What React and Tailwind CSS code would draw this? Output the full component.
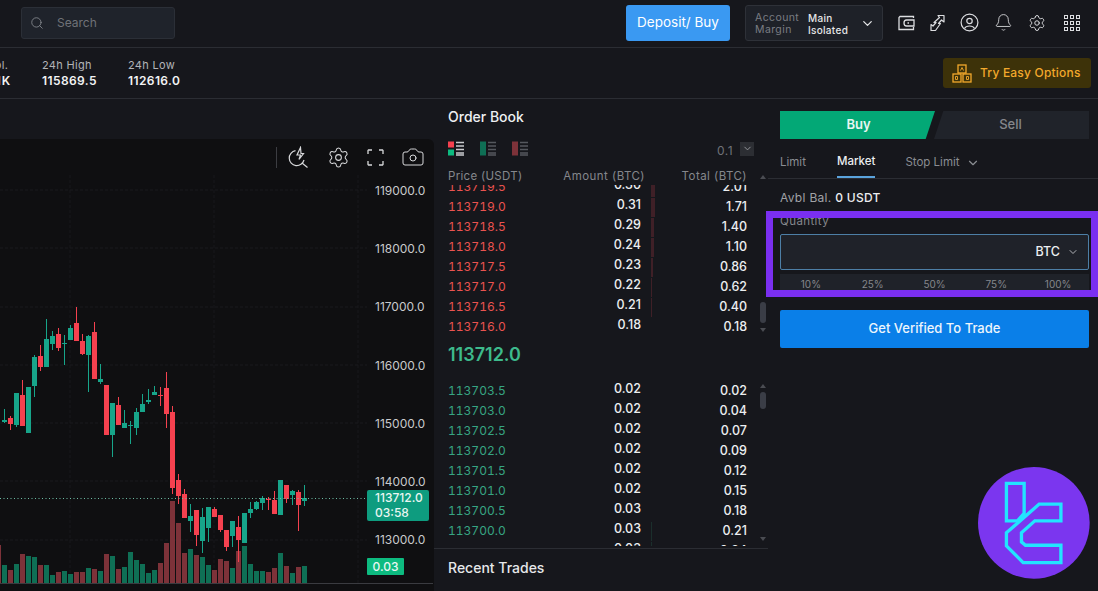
import React from 'react';
import { Search, ChevronDown, Bell, Settings, Camera } from 'lucide-react';

// x = 4.5 + 6 * index, values are [wickTop, wickBottom, bodyTop, bodyBottom, color]
const candles = [
  [409, 423, 420, 422, 'g'], [416, 430, 418, 424, 'r'], [393, 427, 393, 425, 'g'], [380, 426, 395, 426, 'r'],
  [387, 433, 387, 433, 'g'], [355, 397, 357, 386, 'g'], [345, 371, 356, 367, 'r'], [319, 367, 339, 367, 'g'],
  [331, 350, 336, 344, 'g'], [328, 351, 334, 348, 'r'], [335, 365, 343, 344, 'g'], [325, 340, 328, 340, 'g'],
  [307, 341, 323, 341, 'r'], [334, 355, 341, 354, 'r'], [335, 392, 336, 355, 'g'], [322, 379, 332, 379, 'r'],
  [364, 384, 379, 382, 'g'], [385, 435, 385, 435, 'r'], [403, 457, 403, 435, 'g'], [397, 425, 405, 425, 'r'],
  [410, 428, 423, 428, 'g'], [421, 444, 425, 426, 'g'], [408, 435, 412, 428, 'g'], [394, 412, 404, 412, 'g'],
  [389, 404, 400, 402, 'g'], [386, 395, 392, 395, 'g'], [387, 406, 395, 396, 'r'], [372, 428, 388, 414, 'r'],
  [406, 494, 412, 488, 'r'], [474, 504, 480, 496, 'r'], [489, 518, 494, 518, 'r'], [504, 532, 516, 521, 'g'],
  [510, 546, 510, 535, 'r'], [508, 553, 517, 541, 'g'], [507, 542, 507, 528, 'g'], [507, 517, 509, 517, 'r'],
  [515, 532, 515, 530, 'r'], [530, 551, 530, 547, 'r'], [521, 547, 521, 536, 'g'], [516, 562, 527, 540, 'r'],
  [513, 543, 513, 543, 'g'], [502, 518, 509, 513, 'g'], [501, 510, 502, 509, 'g'], [496, 510, 498, 503, 'g'],
  [497, 510, 499, 500, 'r'], [491, 514, 500, 514, 'r'], [480, 515, 480, 515, 'g'], [485, 503, 485, 499, 'r'],
  [490, 505, 491, 495, 'g'], [490, 531, 492, 505, 'r'], [485, 506, 498, 501, 'g'],
];

// same x grid as the candles, top of each volume bar
const volumes = [
  565, 570, 564, 554, 556, 557, 565, 565, 575, 572, 571, 574, 572, 572, 568, 569, 571, 554, 556, 569, 567, 552, 560,
  564, 573, 570, 563, 543, 501, 523, 553, 549, 555, 557, 565, 570, 559, 561, 568, 551, 546, 564, 571, 571, 572, 568,
  553, 566, 573, 567, 566,
];

const axisPrices = ['119000.0', '118000.0', '117000.0', '116000.0', '115000.0', '114000.0', '113000.0'];

const asks = [
  ['113719.5', '0.30', '2.01', 4],
  ['113719.0', '0.31', '1.71', 4],
  ['113718.5', '0.29', '1.40', 3],
  ['113718.0', '0.24', '1.10', 3],
  ['113717.5', '0.23', '0.86', 2],
  ['113717.0', '0.22', '0.62', 1],
  ['113716.5', '0.21', '0.40', 1],
  ['113716.0', '0.18', '0.18', 0],
];

const bids = [
  ['113703.5', '0.02', '0.02', 0],
  ['113703.0', '0.02', '0.04', 0],
  ['113702.5', '0.02', '0.07', 0],
  ['113702.0', '0.02', '0.09', 0],
  ['113701.5', '0.02', '0.12', 0],
  ['113701.0', '0.02', '0.15', 0],
  ['113700.5', '0.03', '0.18', 0],
  ['113700.0', '0.03', '0.21', 1],
  ['113699.5', '0.03', '0.24', 1],
];

const percents = ['10%', '25%', '50%', '75%', '100%'];

const BookRow = ({ row, priceClass, barClass }) => (
  <div className="flex h-5 shrink-0 items-center text-[12.5px]">
    <span className={`w-[115px] text-xs tabular-nums ${priceClass}`}>{row[0]}</span>
    <span className="mb-1 w-[78px] text-right font-medium text-[#eceef0]">{row[1]}</span>
    <span className="ml-[10px] flex h-5 w-[4px] items-center">
      <span className={`h-[19px] ${barClass}`} style={{ width: row[3] }} />
    </span>
    <span className="w-[92px] text-right font-medium text-[#eceef0]">{row[2]}</span>
  </div>
);

const ScrollThumb = ({ top, height }) => (
  <div className="absolute left-[760px] w-[6px] rounded-sm bg-[#3a3d46]" style={{ top, height }} />
);

const ScrollArrow = ({ top, up }) => (
  <svg className="absolute left-[760px] h-[4px] w-[6px]" style={{ top }} viewBox="0 0 6 4" fill="#4a4c52">
    <path d={up ? 'M3 0 6 4H0Z' : 'M0 0H6L3 4Z'} />
  </svg>
);

const ViewIcon = ({ bar, top, bottom }) => (
  <svg width="16" height="15" viewBox="0 0 16 15">
    {bar ? (
      <rect x="0" y="0.5" width="6" height="14" fill={bar} />
    ) : (
      <>
        <rect x="0" y="0.5" width="6" height="6" fill={top} />
        <rect x="0" y="8.5" width="6" height="6" fill={bottom} />
      </>
    )}
    <path d="M8 1.5h8M8 5h8M8 8.500h8M8 12h8M8 14h8" stroke={bar ? '#55585e' : '#c9cbce'} strokeWidth="1.3" />
  </svg>
);

const Logo = () => (
  <svg className="absolute left-[978px] top-[467px] h-[112px] w-[112px]" viewBox="55 51 335 335">
    <circle cx="222" cy="218" r="167" fill="#7b36ef" />
    <g fill="none" stroke="#22e4ff" strokeWidth="10">
      <path d="M140 100H193V190L173 212H140Z" />
      <path d="M238 162H303V212H225L185 248V275L197 285H303V337H190L140 287V248Z" />
    </g>
  </svg>
);

const Chart = () => (
  <svg className="absolute left-0 top-0 h-[452px] w-[434px]" viewBox="0 139 434 452">
    {[190, 248, 307, 365, 423, 481, 540].map((y) => (
      <path key={y} d={`M0 ${y}H367`} stroke="#1a1b1f" strokeDasharray="3 2" />
    ))}
    {[70, 214, 358].map((x) => (
      <path key={x} d={`M${x} 175V583`} stroke="#18191c" strokeDasharray="3 2" />
    ))}
    <rect x="0" y="545" width="1" height="38" fill="#7d3239" />
    {volumes.map((top, i) => (
      <rect
        key={i}
        x={2 + 6 * i}
        y={top}
        width="5"
        height={583 - top}
        fill={candles[i][4] === 'g' ? '#0f6f55' : '#7d3239'}
      />
    ))}
    {candles.map(([wt, wb, bt, bb, c], i) => {
      const x = 2 + 6 * i;
      const color = c === 'g' ? '#17a58a' : '#f5414f';
      return (
        <g key={i} fill={color}>
          <rect x={x + 2} y={wt} width="1" height={wb - wt} />
          <rect x={x} y={bt} width="5" height={Math.max(bb - bt, 1)} />
        </g>
      );
    })}
    <path d="M0 498.500H367" stroke="#6fbfa6" strokeDasharray="1 2.500" />
    <path d="M0 583.500H433" stroke="#3a3b40" />
  </svg>
);

const App = () => {
  return (
    <div className="relative flex h-screen w-full flex-col overflow-hidden bg-[#16171c] font-['Inter',sans-serif] text-white">
      {/* Top bar */}
      <header className="flex h-12 shrink-0 items-center border-b border-[#2b2d33] pb-[2px]">
        <div className="ml-[21px] flex h-8 w-[154px] items-center gap-[13px] rounded-[3px] border border-[#2b2f37] bg-[#1f232b] pl-2">
          <Search size={14} strokeWidth={1.4} className="text-[#8b8e94]" />
          <span className="text-xs text-[#6f7278]">Search</span>
        </div>
        <button className="ml-auto flex h-9 w-[104px] items-center justify-center rounded-[3px] bg-[#3a99f2] text-[13.5px] text-white">
          Deposit/ Buy
        </button>
        <div className="ml-[15px] flex h-9 w-[138px] items-center rounded-[3px] border border-[#2e3138] bg-[#1e2128] pl-[9px] pt-[2px] text-[10.5px] leading-[12px] tracking-[0.4px]">
          <div className="w-[53px] text-[#7a7d83]">
            <div>Account</div>
            <div>Margin</div>
          </div>
          <div className="text-[10px] font-medium tracking-[0.3px] text-[#e6e7e9]">
            <div>Main</div>
            <div>Isolated</div>
          </div>
          <ChevronDown size={15} strokeWidth={2} className="ml-[12px] text-[#e6e7e9]" />
        </div>
        <div className="ml-[15px] mr-[18px] flex items-center gap-[15px] text-[#dcdde0]">
          <svg width="17" height="16" viewBox="0 0 17 16" fill="none" stroke="currentColor" strokeWidth="1.3" className="-mr-[1px]">
            <path d="M15.500 3V1.500H2L1 2.500V14.500H15.500V12" />
            <path d="M16 5H8.500C6.500 5 6 6.500 6 8S6.500 11 8.500 11H16Z" />
            <path d="M9.500 8H11" />
          </svg>
          <svg width="16" height="18" viewBox="0 0 16 18" fill="none" stroke="currentColor" strokeWidth="1.2" strokeLinejoin="round">
            <path d="M9 1.500H15V8L12.500 6 9.500 9.500H11.500L6.500 16.500H2V10.500L4 12 7 8.500H5L10.500 3.500Z" />
          </svg>
          <svg width="19" height="19" viewBox="0 0 19 19" fill="none" stroke="currentColor" strokeWidth="1.2">
            <circle cx="9.500" cy="9.500" r="8.400" />
            <circle cx="9.500" cy="8" r="2.700" />
            <path d="M4.500 15.500C5.500 13.500 7 13 9.500 13S13.500 13.500 14.500 15.500" />
          </svg>
          <Bell size={19} strokeWidth={1.1} />
          <Settings size={18} strokeWidth={1.3} />
          <svg width="16" height="16" viewBox="0 0 16 16" fill="currentColor" className="ml-[3px]">
            {[0, 6, 12].map((y) =>
              [0, 6, 12].map((x) => (
                <path key={`${x}-${y}`} fillRule="evenodd" d={`M${x} ${y}h4v4h-4zM${x + 1} ${y + 1}v2h2v-2z`} />
              )),
            )}
          </svg>
        </div>
      </header>

      {/* Stats */}
      <div className="flex h-[51px] shrink-0 items-center border-b border-[#2b2d33]">
        <div className="ml-[-37px] w-[79px]">
          <div className="text-[11px] tracking-[0.3px] text-[#b2b4b8]">24h Vol.</div>
          <div className="text-xs font-semibold tracking-[0.9px] text-[#f2f3f4]">1021.1K</div>
        </div>
        <div className="w-[86px]">
          <div className="text-[11px] tracking-[0.3px] text-[#b2b4b8]">24h High</div>
          <div className="text-xs font-semibold tracking-[0.4px] text-[#f2f3f4]">115869.5</div>
        </div>
        <div className="w-[86px]">
          <div className="text-[11px] tracking-[0.3px] text-[#b2b4b8]">24h Low</div>
          <div className="text-xs font-semibold tracking-[0.4px] text-[#f2f3f4]">112616.0</div>
        </div>
        <div className="ml-auto mr-[7px] flex h-[30px] w-[148px] items-center gap-2 rounded-[3px] bg-[#3d3209] pl-[9px] text-xs font-medium tracking-[0.2px] text-[#f3a92c]">
          <svg width="20" height="19" viewBox="0 0 20 19" fill="none" stroke="currentColor" strokeWidth="1.3">
            <rect x="6" y="1" width="8" height="8" />
            <rect x="1" y="10" width="8" height="8" />
            <rect x="11" y="10" width="8" height="8" />
            <path d="M8.500 6.500 10 3.500l1.500 3M3.500 12.500h2v3h-2zM16.500 12.500h-2v3h2z" strokeWidth="0.9" />
          </svg>
          Try Easy Options
        </div>
      </div>

      <main className="flex min-h-0 flex-1">
        {/* Chart */}
        <section className="mt-10 flex w-[434px] shrink-0 flex-col">
          <div className="relative flex-1 rounded-tr-md bg-[#0f0f11]">
            <Chart />
            <div className="relative flex h-9 items-center justify-end gap-[17px] pr-[9px] text-[#d8d9db]">
              <span className="-mr-[6px] h-[21px] w-px bg-[#3c3d42]" />
              <svg width="22" height="22" viewBox="0 0 22 22" fill="none" stroke="currentColor" strokeWidth="1.200">
                <path d="M7.500 4.700A7.500 7.500 0 1 0 16 14" />
                <path d="M12.500 1.500 9 9H12.500L11 13.500 15.500 7.500H13Z" />
                <path d="M14 17 19.500 21.500" />
              </svg>
              <Settings size={23} strokeWidth={1.1} />
              <svg width="17" height="17" viewBox="0 0 17 17" fill="none" stroke="currentColor" strokeWidth="1.3">
                <path d="M1 5V1.500L1.500 1H5M12 1H15.500L16 1.500V5M16 12V15.500L15.500 16H12M5 16H1.500L1 15.500V12" />
              </svg>
              <Camera size={24} strokeWidth={1} />
            </div>
            <div className="relative ml-[375px] flex w-[50px] flex-col gap-[43.200px] pt-[8px] text-xs leading-[15px] text-[#c9cacc]">
              {axisPrices.map((p) => (
                <span key={p}>{p}</span>
              ))}
            </div>
            <div className="absolute left-[367px] top-[351px] h-[31px] w-[62px] rounded-[2px] bg-[#0e9c7f] pl-[8px] pt-[1px] text-xs font-medium leading-[14.500px] text-[#e8f6f2]">
              <div>113712.0</div>
              <div>03:58</div>
            </div>
            <div className="absolute left-[367px] top-[419px] flex h-[17px] w-[37px] items-center justify-center rounded-[1px] bg-[#0dbb80] text-xs font-medium text-[#e8f6f2]">
              0.03
            </div>
          </div>
        </section>

        {/* Order book */}
        <section className="flex w-[334px] shrink-0 flex-col pl-[14px]">
          <h2 className="flex h-9 shrink-0 items-center text-sm font-medium text-[#eef0f2]">Order Book</h2>
          <div className="flex h-[26px] shrink-0 items-center">
            <div className="flex gap-4">
              <ViewIcon top="#f5414f" bottom="#0dbb80" />
              <ViewIcon bar="#0f6f55" />
              <ViewIcon bar="#7d3239" />
            </div>
            <span className="ml-[189px] mt-[6px] text-xs tracking-[0.5px] text-[#6f7278]">0.1</span>
            <span className="ml-[7px] mt-[1px] flex h-[14px] w-[14px] items-center justify-center bg-[#2c2e33] text-[#9a9ca1]">
              <ChevronDown size={11} />
            </span>
          </div>
          <div className="flex h-6 shrink-0 items-end text-[11.500px] tracking-[0.3px] text-[#85878c]">
            <span className="w-[115px]">Price (USDT)</span>
            <span className="w-[82px] text-right tracking-[0.45px]">Amount (BTC)</span>
            <span className="w-[102px] text-right tracking-[0.45px]">Total (BTC)</span>
          </div>
          <div className="flex h-[152px] shrink-0 flex-col justify-end overflow-hidden">
            {asks.map((row) => (
              <BookRow key={row[0]} row={row} priceClass="text-[#ea5350]" barClass="bg-[#3f2027]" />
            ))}
          </div>
          <div className="flex h-[35px] shrink-0 items-center text-lg font-semibold text-[#3dba8c]">113712.0</div>
          <div className="flex h-[174px] shrink-0 flex-col overflow-hidden pt-[9px]">
            {bids.map((row) => (
              <BookRow key={row[0]} row={row} priceClass="text-[#36a583]" barClass="bg-[#1b2f2c]" />
            ))}
          </div>
          <div className="-ml-[14px] mt-[2px] flex h-[38px] shrink-0 items-center border-t border-[#2b2d33] pl-[14px] text-sm font-medium text-[#e6e8ea]">
            Recent Trades
          </div>
        </section>

        {/* Trade panel */}
        <section className="flex flex-1 flex-col">
          <div className="ml-[12px] mr-[9px] mt-3 flex h-7 text-[13px] font-semibold">
            <div className="flex w-[155px] items-center justify-center bg-[#03a876] pl-[2px] text-[#e8f6f2] [clip-path:polygon(0_0,100%_0,94%_100%,0_100%)]">
              Buy
            </div>
            <div className="-ml-[1px] flex flex-1 items-center justify-center bg-[#20232a] pr-[2px] font-medium text-[#85878c] [clip-path:polygon(6%_0,100%_0,100%_100%,0_100%)]">
              Sell
            </div>
          </div>
          <div className="mt-[9px] flex h-[31px] items-center border-b border-[#2b2d33] pl-[12px] text-[11.500px] text-[#8a8d92]">
            <span>Limit</span>
            <span className="relative ml-[31px] flex h-[30px] items-center pb-[2px] font-medium text-[#eceef0]">
              Market
              <span className="absolute bottom-0 left-0 right-0 h-[2px] bg-[#5aa3dc]" />
            </span>
            <span className="ml-[30px]">Stop Limit</span>
            <ChevronDown size={14} className="ml-[6px]" />
          </div>
          <div className="ml-[12px] mt-[11px] text-xs tracking-[0.3px] text-[#a0a2a6]">
            Avbl Bal. <span className="font-medium text-[#eceef0]">0 USDT</span>
          </div>
          <div className="ml-[12px] mt-[8px] text-[11.500px] leading-[14px] tracking-[0.4px] text-[#85878c]">Quantity</div>
          <div className="ml-[12px] mr-[9px] mt-[6px] flex h-9 items-center justify-end rounded-[2px] border border-[#4d7fa6] bg-[#1f2229] pr-[9px] text-[12.500px] font-medium text-[#eceef0]">
            BTC
            <ChevronDown size={12} className="ml-[7px] text-[#b0b2b6]" />
          </div>
          <div className="ml-[12px] mr-[9px] mt-1 grid h-[22px] grid-cols-5 bg-[#1f2229] pt-[4px] text-center text-[10px] leading-[12px] text-[#85878c]">
            {percents.map((p) => (
              <span key={p}>{p}</span>
            ))}
          </div>
          <button className="ml-[12px] mr-[9px] mt-[14px] h-[38px] rounded-[2px] bg-[#0a7fe8] text-[13px] font-medium text-[#eef5fc]">
            Get Verified To Trade
          </button>
        </section>
      </main>

      {/* Scrollbars of the book lists */}
      <ScrollArrow top={175} up />
      <ScrollArrow top={328} />
      <ScrollThumb top={302} height={21} />
      <ScrollArrow top={384} up />
      <ScrollArrow top={537} />
      <ScrollThumb top={392} height={17} />

      {/* Highlight box */}
      <div className="absolute left-[766px] top-[211px] h-[86px] w-[332px] border-[7px] border-[#7a2ff0]" />
      <Logo />
    </div>
  );
};

export default App;
